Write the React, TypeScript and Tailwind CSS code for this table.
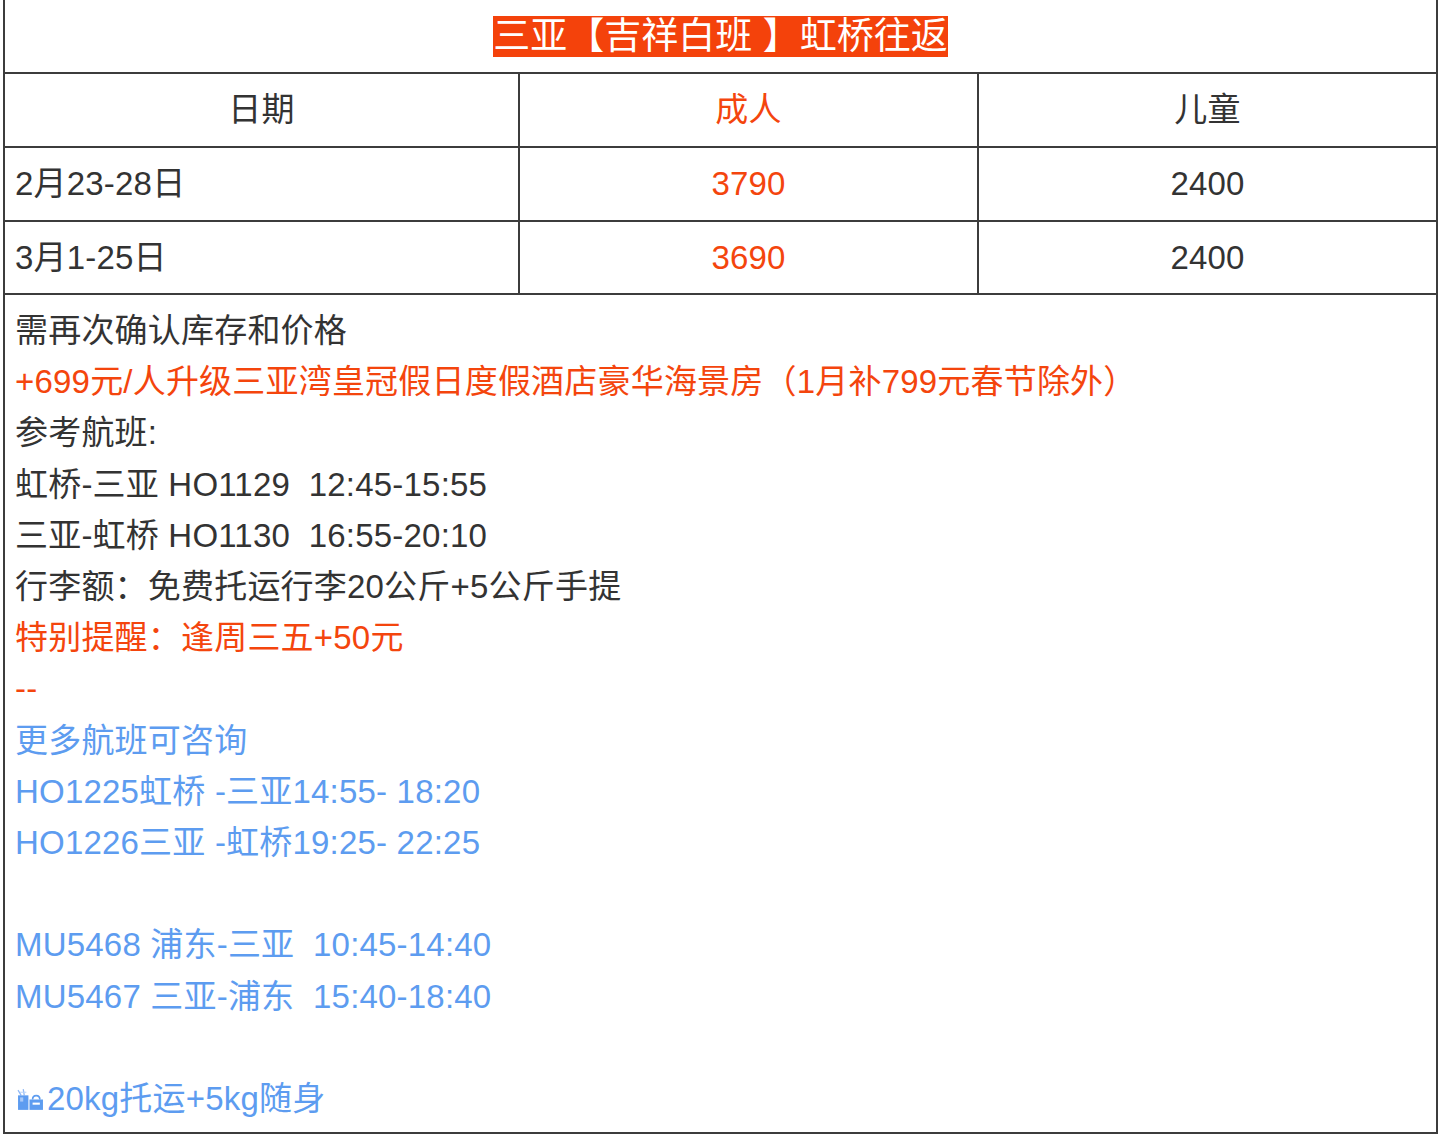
import React from "react";

const font = { fontFamily: '"Liberation Sans", Arial, "Noto Sans CJK SC", sans-serif' };

function LuggageIcon() {
  return (
    <svg width="27" height="23" viewBox="0 0 26 22" className="inline-block mr-[3px] mt-[2px]">
      <path d="M1 2 L4 7" stroke="#8fb8f5" strokeWidth="1.2" />
      <path d="M6 1 L7 7" stroke="#8fb8f5" strokeWidth="1.2" />
      <path d="M3 4 L9 4" stroke="#b9d3f8" strokeWidth="1" />
      <rect x="1" y="7" width="10" height="14" fill="#5d9cf0" />
      <rect x="3" y="9" width="3" height="4" fill="#a9c9f7" />
      <path d="M15 11 C15 6, 22 6, 22 11" stroke="#5d9cf0" strokeWidth="1.6" fill="none" />
      <rect x="12" y="11" width="13" height="10" fill="#5d9cf0" />
      <rect x="15" y="14" width="7" height="2" fill="#ffffff" />
    </svg>
  );
}

export default function App() {
  const dark = "text-[#333333]";
  const red = "text-[#f4450d]";
  const blue = "text-[#5d9cf0]";
  return (
    <div className="bg-white min-h-[1147px]" style={font}>
      <div className="ml-[3px] w-[1435px] border-x-2 border-b-2 border-[#3c3c3c] text-[33px] leading-[51.2px] tracking-[0.2px]">
        {/* Title */}
        <div className="h-[74px] border-b-2 border-[#3c3c3c] flex items-center justify-center">
          <span className="bg-[#f4420b] text-white text-[37px] tracking-normal leading-[41px] whitespace-pre">三亚【吉祥白班 】虹桥往返</span>
        </div>
        {/* Header */}
        <div className="flex h-[74px] border-b-2 border-[#3c3c3c]">
          <div className={`w-[515px] border-r-2 border-[#3c3c3c] flex items-center justify-center ${dark}`}>日期</div>
          <div className={`w-[459px] border-r-2 border-[#3c3c3c] flex items-center justify-center ${red}`}>成人</div>
          <div className={`flex-1 flex items-center justify-center ${dark}`}>儿童</div>
        </div>
        {/* Row 1 */}
        <div className="flex h-[74px] border-b-2 border-[#3c3c3c]">
          <div className={`w-[515px] border-r-2 border-[#3c3c3c] flex items-center pl-[10px] ${dark}`}>2月23-28日</div>
          <div className={`w-[459px] border-r-2 border-[#3c3c3c] flex items-center justify-center ${red}`}>3790</div>
          <div className={`flex-1 flex items-center justify-center ${dark}`}>2400</div>
        </div>
        {/* Row 2 */}
        <div className="flex h-[73px] border-b-2 border-[#3c3c3c]">
          <div className={`w-[515px] border-r-2 border-[#3c3c3c] flex items-center pl-[10px] ${dark}`}>3月1-25日</div>
          <div className={`w-[459px] border-r-2 border-[#3c3c3c] flex items-center justify-center ${red}`}>3690</div>
          <div className={`flex-1 flex items-center justify-center ${dark}`}>2400</div>
        </div>
        {/* Notes */}
        <div className="pl-[10px] pt-[10px] pb-[8px] whitespace-pre">
          <div className={dark}>需再次确认库存和价格</div>
          <div className={red}>+699元/人升级三亚湾皇冠假日度假酒店豪华海景房（1月补799元春节除外）</div>
          <div className={dark}>参考航班:</div>
          <div className={dark}>虹桥-三亚 HO1129  12:45-15:55</div>
          <div className={dark}>三亚-虹桥 HO1130  16:55-20:10</div>
          <div className={dark}>行李额：免费托运行李20公斤+5公斤手提</div>
          <div className={red}>特别提醒：逢周三五+50元</div>
          <div className={red}>--</div>
          <div className={blue}>更多航班可咨询</div>
          <div className={blue}>HO1225虹桥 -三亚14:55- 18:20</div>
          <div className={blue}>HO1226三亚 -虹桥19:25- 22:25</div>
          <div className="h-[51.2px]"></div>
          <div className={blue}>MU5468 浦东-三亚  10:45-14:40</div>
          <div className={blue}>MU5467 三亚-浦东  15:40-18:40</div>
          <div className="h-[51.2px]"></div>
          <div className={`${blue} flex items-center pl-[2px]`}>
            <LuggageIcon />
            <span>20kg托运+5kg随身</span>
          </div>
        </div>
      </div>
    </div>
  );
}
